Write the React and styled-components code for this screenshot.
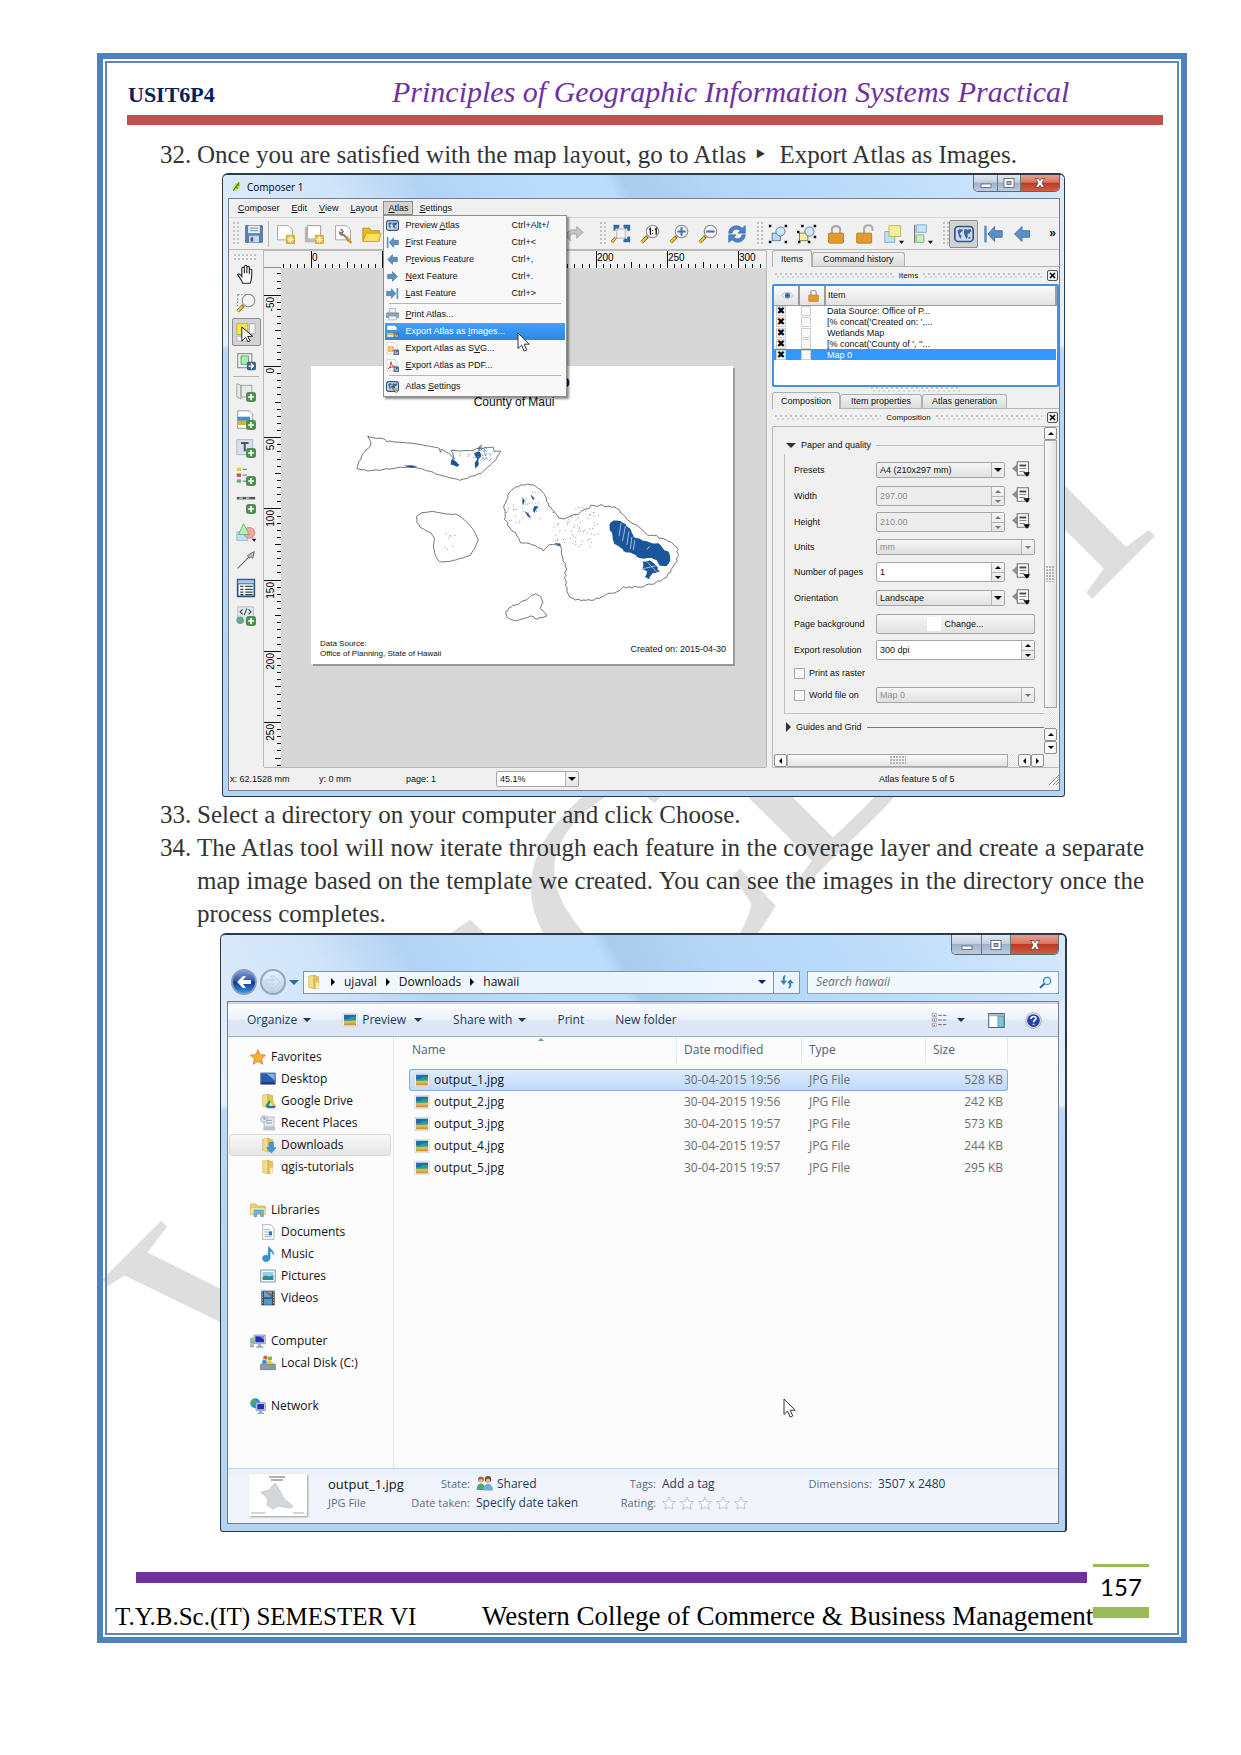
import React from "react";
import styled, { createGlobalStyle, css } from "styled-components";

const GlobalStyle = createGlobalStyle`
  *, *::before, *::after { box-sizing: border-box; }
  body { margin: 0; background: #fff; }
  button, input, select { font: inherit; color: inherit; margin: 0; padding: 0; }
  button { background: none; border: 0; }
  ol, ul { margin: 0; padding: 0; list-style: none; }
  h1, h2, p { margin: 0; font-weight: inherit; font-size: inherit; }
  svg { display: block; flex: none; }
`;

const serif = `"Liberation Serif", "Times New Roman", serif`;
const sans = `"Liberation Sans", Arial, sans-serif`;
const segoe = `"Open Sans", "Noto Sans", sans-serif`;

/* ---------- document page ---------- */

const Page = styled.div`
  padding: 53px 54px 112px 97px;
`;
const Border = styled.div`
  position: relative;
  border: 6px solid #4f81bd;
  padding: 2px;
`;
const Inner = styled.main`
  border: 2px solid #5b88bb;
`;
const Watermark = styled.div`
  position: absolute;
  inset: 0;
  z-index: -1;
  display: flex;
  align-items: center;
  justify-content: center;
  font: 334px/400px ${serif};
  color: #dedede;
  white-space: nowrap;
  user-select: none;
  span { transform: translate(-13px, 54px) rotate(-45deg); }
`;
const Header = styled.header`
  display: grid;
  grid-template-columns: 264px 1fr;
  align-items: baseline;
  height: 62px;
  margin: 0 14px 13px 20px;
  padding: 12px 0 0 1px;
  border-bottom: 10px solid #c0504d;
  font-family: ${serif};
  line-height: 33px;
`;
const CourseCode = styled.strong`
  font-size: 22px;
  color: #002060;
`;
const CourseTitle = styled.h1`
  font-size: 30px;
  font-style: italic;
  color: #7030a0;
`;
const Steps = styled.ol`
  padding: 0 33px 0 53px;
  font: 25px/33px ${serif};
  color: #333;
`;
const Step = styled.li`
  display: grid;
  grid-template-columns: 37px 1fr;
  text-align: justify;
`;
const Arrow = styled.span`
  display: inline-block;
  width: 27px;
  padding-left: 7px;
  font: 24px/16px "DejaVu Sans", sans-serif;
`;
const Figure = styled.div`
  display: flex;
  justify-content: center;
  padding: ${(p) => p.$pad};
`;
const Footer = styled.footer`
  display: grid;
  grid-template-columns: minmax(0, 1fr) 56px;
  column-gap: 6px;
  align-items: start;
  margin-top: 32px;
  padding: 0 28px 0 8px;
`;
const PurpleBar = styled.div`
  height: 11px;
  margin: 8px 0 0 21px;
  background: #7030a0;
`;
const PageNumber = styled.div`
  grid-row: span 2;
  border-top: 3px solid #9bbb59;
  border-bottom: 11px solid #9bbb59;
  font: 24px/40px Lato, sans-serif;
  text-align: center;
`;
const FooterText = styled.div`
  position: relative;
  display: grid;
  grid-template-columns: 367px 1fr;
  align-items: baseline;
  height: 50px;
  padding-top: 17px;
  font: 27px/33px ${serif};
  white-space: nowrap;
`;
const Semester = styled.span`
  font-size: 25px;
`;

/* ---------- glass window frame ---------- */

const Window = styled.section`
  width: ${(p) => p.$width}px;
  max-width: 100%;
  border: 1px solid #2f3943;
  border-top-width: 2px;
  border-right-width: ${(p) => (p.$heavy ? 2 : 1)}px;
  border-radius: 6px 6px 3px 3px;
  padding: 0 ${(p) => (p.$heavy ? 6 : 4)}px ${(p) => (p.$heavy ? 7 : 5)}px ${(p) => (p.$heavy ? 6 : 5)}px;
  background: linear-gradient(180deg, #d9e8f9 0, #e6f0fb 170px, #b9d8f7 175px, #b4d4f4 100%);
`;
const Glass = styled.div`
  margin: 0 ${(p) => (p.$heavy ? -6 : -4)}px 0 ${(p) => (p.$heavy ? -6 : -5)}px;
  padding: 0 ${(p) => (p.$heavy ? 6 : 4)}px 0 ${(p) => (p.$heavy ? 6 : 5)}px;
  border-radius: 4px 4px 0 0;
  background: linear-gradient(60deg, #dcebfb 0, #cfe3f9 14%, #b3d3f4 24%, #bcdcfd 38%, #bcdcfd 46%, #a9cdee 48%, #b4d5f5 58%, #b9dafa 70%, #c2dffb 82%, #d6e8fb 100%);
`;
const Caption = styled.div`
  display: flex;
  align-items: flex-start;
  justify-content: space-between;
`;
const Title = styled.h2`
  display: flex;
  align-items: center;
  gap: 5px;
  height: 23px;
  padding-left: 3px;
  font: 10px/20px ${segoe};
`;
const CaptionButtons = styled.div`
  display: flex;
  border: 1px solid #5c6875;
  border-top: 0;
  border-radius: 0 0 5px 5px;
  overflow: hidden;
`;
const CaptionButton = styled.button`
  display: flex;
  align-items: center;
  justify-content: center;
  width: ${(p) => p.$w}px;
  height: ${(p) => p.$h}px;
  border-left: ${(p) => (p.$first ? 0 : 1)}px solid #6b7783;
  background: ${(p) =>
    p.$close
      ? "linear-gradient(#e6a08e 0, #d67763 45%, #bd3a20 50%, #cf6040 100%)"
      : "linear-gradient(#dfe9f3 0, #c3d1e0 45%, #9fb2c8 50%, #bccde0 100%)"};
`;
const Client = styled.div`
  border: 1px solid #76808c;
  background: #f0f0f0;
`;

function CaptionControls({ w, wc, h }) {
  return (
    <CaptionButtons>
      <CaptionButton $w={w} $h={h} $first aria-label="Minimize">
        <svg width="12" height="12" viewBox="0 0 12 12"><rect x="1" y="7" width="10" height="3.5" fill="#fff" stroke="#556" strokeWidth=".8" /></svg>
      </CaptionButton>
      <CaptionButton $w={w} $h={h} aria-label="Maximize">
        <svg width="12" height="12" viewBox="0 0 12 12"><rect x="1" y="1.5" width="10" height="9" fill="#fff" stroke="#556" strokeWidth=".8" /><rect x="4" y="4.5" width="4" height="3" fill="#a9bacb" stroke="#556" strokeWidth=".8" /></svg>
      </CaptionButton>
      <CaptionButton $w={wc} $h={h} $close aria-label="Close">
        <svg width="12" height="12" viewBox="0 0 12 12"><path d="M1.5 1.5h3L6 3.7 7.500 1.5h3L8 6l2.500 4.500h-3L6 8.300 4.500 10.500h-3L4 6z" fill="#fff" stroke="#5b3a3a" strokeWidth=".8" /></svg>
      </CaptionButton>
    </CaptionButtons>
  );
}

/* ---------- icons, drawn on a 24 unit grid ---------- */

const plus = (
  <g><rect x="12" y="12" width="12" height="12" rx="3" fill="#4e8f52" /><path d="M18 14.500v7M14.500 18h7" stroke="#fff" strokeWidth="2" /></g>
);
const lens = (
  <g><path d="M9 15l-7 7" stroke="#7a5a10" strokeWidth="4" /><path d="M8 16l-6 6" stroke="#f2c830" strokeWidth="2.500" /><circle cx="15" cy="9" r="7.500" fill="#f3f3f3" stroke="#8c8c8c" strokeWidth="1.300" /></g>
);
const paper = <path d="M3 2h13l5 5v12H3z" fill="#fff" stroke="#999" />;
const star = <g><rect x="13" y="13" width="11" height="11" rx="1" fill="#d9b33c" /><path d="M18.500 14.500v8M14.500 18.500h8M15.700 15.700l5.600 5.600M21.300 15.700l-5.600 5.600" stroke="#fff6c8" strokeWidth="1.300" /></g>;
const saveBadge = <g><rect x="14" y="14" width="10" height="10" rx="1" fill="#4b6c8e" /><path d="M17 16v5h4v-3" stroke="#fff" strokeWidth="1.200" fill="none" /></g>;
const left = "M3 12l9-9v5h9v8h-9v5z";
const right = "M21 12l-9-9v5H3v8h9v5z";
const blue = "#5d8fc4";
const folder = <g><path d="M4 3l8-1v20l-8-2z" fill="#f3dd87" stroke="#cda94a" strokeWidth=".8" /><path d="M12 2l7 2v17l-7 1z" fill="#e6c55e" stroke="#c59f3d" strokeWidth=".8" /><path d="M15 13h4v8l-4 .6z" fill="#faf0bb" /></g>;
const monitor = <g><path d="M6 3h17v13H6z" fill="#c9d3dc" stroke="#7d8893" /><path d="M8 5h13v9H8z" fill="#1f2fae" /><path d="M14 5h7v5z" fill="#7397ec" /><path d="M12 17h5v3h3v2H9v-2h3z" fill="#9fa9b3" /></g>;
const mapGlyph = <g><rect x="1" y="3" width="22" height="18" rx="4" fill="#c9dcf0" stroke="#33587f" strokeWidth="2" /><path d="M4 8l3-2 4 1-1 2-2 1-1 2 2 2-1 4-2-3-1-4zM12 7l2-1 2 1 4-1 1 3-2 1v2l-2-1-1 2 1 1-2 4-2-4-1-3zM18 15l2 1-1 2-2-1z" fill="#3c689a" /></g>;

const ICONS = {
  qgis: <g><path d="M3 20L9 5l9-3 3 4-3 10-8 6z" fill="#c8e04a" /><path d="M5 21L18 3M9 12l6 4M12 8l6 2" stroke="#4c8a20" strokeWidth="2.500" fill="none" /></g>,
  save: <g><path d="M2 2h20v20H2z" fill="#5b82ad" stroke="#3d6188" /><path d="M5 2h14v9H5z" fill="#e8eff5" /><path d="M7 5h10M7 8h10" stroke="#8fa7bd" strokeWidth="1.500" /><path d="M6 14h12v8H6z" fill="#cbd7e2" /><path d="M8 16h3v5H8z" fill="#3d6188" /></g>,
  newPage: <g>{paper}{star}</g>,
  copyPage: <g><path d="M1 4h3v15h10v3H1z" fill="#b8b8b8" /><path d="M4 2h16v16H4z" fill="#fff" stroke="#8a8a8a" />{star}</g>,
  wrench: <g>{paper}<path d="M9 6l3 3-1 2-3-1c0 3 3 4 5 3l6 8" fill="none" stroke="#777" strokeWidth="2" /><path d="M16 15l6 8" stroke="#c9a227" strokeWidth="3" /></g>,
  open: <g><path d="M1 5h8l2 3h10v12H1z" fill="#e9b820" stroke="#b98d15" /><path d="M5 11h18l-3 10H1z" fill="#ffdf5e" stroke="#c99a1c" /></g>,
  redo: <path d="M7 20c-8-3-6-13 3-13h4V3l8 7-8 7v-5h-4c-4 0-5 4-3 8z" fill="#c4c4c4" stroke="#a2a2a2" />,
  zoomFull: <g><path d="M6 16l-5 6" stroke="#8a6a18" strokeWidth="3.500" /><path d="M6 16l-5 6" stroke="#f2c830" strokeWidth="2" /><path d="M7 6h10v11H7z" fill="#f4f4f4" stroke="#aaa" /><path d="M3 1h7v3L8 6 6 5 5 8 3 8zM23 1h-8v3l2 2 2-1 1 3h3zM23 22h-8v-3l2-2 2 1 1-3h3z" fill="#356aa5" /></g>,
  zoomActual: <g>{lens}<path d="M11 7l1.500-1.500V13M18 7l1.500-1.500V13" stroke="#222" strokeWidth="1.600" fill="none" /><path d="M15 7.500v1M15 11v1" stroke="#222" strokeWidth="1.500" /></g>,
  zoomIn: <g>{lens}<path d="M15 4v10M10 9h10" stroke="#3d74b5" strokeWidth="2.500" /></g>,
  zoomOut: <g>{lens}<path d="M10 9h10" stroke="#3d74b5" strokeWidth="2.500" /></g>,
  refresh: <g fill="#4c83c3" stroke="#2f609c" strokeWidth=".7"><path d="M2 11C2 3 12-1 18 5l4-3v9h-9l3-3C12 5 7 6 6 11z" /><path d="M22 13c0 8-10 12-16 6l-4 3v-9h9l-3 3c4 3 9 2 10-3z" /></g>,
  group: <g><path d="M5 11h10v9H5z" fill="#b9d9f4" stroke="#4d6f96" /><circle cx="15" cy="9" r="5.500" fill="#cfe6fa" stroke="#4d6f96" /><path d="M1 1h3v3H1zM20 1h3v3h-3zM1 20h3v3H1zM20 20h3v3h-3z" fill="#111" /></g>,
  ungroup: <g><path d="M3 11h10v9H3z" fill="#f3eea0" stroke="#6d6d3c" /><circle cx="15" cy="9" r="5.500" fill="#cfe6fa" stroke="#4d6f96" /><path d="M5 1h3v3H5zM20 1h3v3h-3zM0 8h3v3H0zM1 20h3v3H1zM13 20h3v3h-3zM20 14h3v3h-3z" fill="#111" /></g>,
  lock: <g><path d="M7 12V7c0-6 10-6 10 0v5" fill="none" stroke="#aaa" strokeWidth="2.500" /><rect x="3" y="11" width="18" height="12" rx="1" fill="#e39a2d" stroke="#b87516" /></g>,
  unlock: <g><path d="M11 11V6c0-6 10-6 10 0v2" fill="none" stroke="#aaa" strokeWidth="2.500" /><rect x="2" y="11" width="18" height="12" rx="1" fill="#e39a2d" stroke="#b87516" /></g>,
  raise: <g><path d="M1 9h12v13H1z" fill="#bfe0f7" stroke="#7ba3c4" /><path d="M6 2h14v13H6z" fill="#f4ee9a" stroke="#b8ae4a" /><path d="M18 20h6l-3 4z" fill="#111" /></g>,
  align: <g><path d="M2 1v22" stroke="#777" strokeWidth="1.500" /><path d="M4 1h12v9H4z" fill="#c4e4fb" stroke="#7ba3c4" /><path d="M4 13h9v9H4z" fill="#c4f2c4" stroke="#7ab57a" /><path d="M18 20h6l-3 4z" fill="#111" /></g>,
  preview: mapGlyph,
  first: <g><path d="M3 2v20" stroke={blue} strokeWidth="3" /><path d="M6 12l8-9v5h9v8h-9v5z" fill={blue} stroke="#3e6c9e" /></g>,
  prev: <path d={left} fill={blue} stroke="#3e6c9e" />,
  next: <path d={right} fill={blue} stroke="#3e6c9e" />,
  last: <g><path d="M21 2v20" stroke={blue} strokeWidth="3" /><path d="M18 12l-8-9v5H1v8h9v5z" fill={blue} stroke="#3e6c9e" /></g>,
  print: <g><path d="M6 1h12v9H6z" fill="#e5edf2" stroke="#8798a5" /><path d="M1 9h22v9H1z" fill="#8fa3b1" stroke="#5f7483" /><path d="M5 15h14v7H5z" fill="#eef2f4" stroke="#8798a5" /></g>,
  expImage: <g><path d="M2 1h14l4 4v17H2z" fill="#fff" stroke="#999" /><path d="M2 9h18v6H2z" fill="#4f91c9" /><path d="M2 15h18v4H2z" fill="#e0b13a" />{saveBadge}</g>,
  expSvg: <g><path d="M2 1h14l4 4v17H2z" fill="#fff" stroke="#bbb" /><circle cx="9" cy="13" r="6" fill="#f0a23c" /><path d="M9 7v12M3 13h12" stroke="#fff2d2" strokeWidth="1.500" />{saveBadge}</g>,
  expPdf: <g><path d="M2 1h14l4 4v17H2z" fill="#fff" stroke="#bbb" /><path d="M4 18c4-3 6-8 5-13 0 6 4 9 9 10-6-1-10 0-14 3z" fill="none" stroke="#c9302c" strokeWidth="1.800" />{saveBadge}</g>,
  atlasSet: <g>{mapGlyph}<path d="M10 11l10 12" stroke="#5d5d5d" strokeWidth="4" /><path d="M14 15l7 8" stroke="#e8bf3a" strokeWidth="2.500" /></g>,
  hand: <path d="M8 23c-1-4-4-7-6-10 1-2 3-1 5 2V5c1-2 3-1 3 0v6-8c1-2 3-2 3 0v8-7c1-2 3-1 3 0v8-5c1-1 3-1 3 1 0 6 0 11-2 15z" fill="#fff" stroke="#222" strokeWidth="1.300" />,
  pageZoom: <g><path d="M2 2h10M2 2v15" stroke="#888" strokeWidth="1.200" strokeDasharray="2 2" />{lens}</g>,
  select: <g><path d="M1 2h13v13H1z" fill="#f7e64a" stroke="#c2a92b" /><path d="M16 2h7v12h-7zM1 17h14v6H1z" fill="#f2f2f2" stroke="#aaa" /><path d="M7 6l13 11-6 .5 3 5-2.500 1.500-3-5.500L7 23z" fill="#fff" stroke="#222" strokeWidth="1.200" /></g>,
  moveContent: <g><path d="M2 3h17v17H2z" fill="none" stroke="#999" strokeWidth="1.500" /><path d="M6 6h9v10H6z" fill="#a8eeb0" stroke="#5b9b63" /><rect x="13" y="13" width="11" height="10" rx="2" fill="#3f648b" /><path d="M15 18h6m-3-3l3 3-3 3" stroke="#fff" strokeWidth="1.500" fill="none" /></g>,
  addMap: <g><path d="M1 2l5 2v16l-5-2zM6 4h13v14H6z" fill="#e9e9e9" stroke="#999" />{plus}</g>,
  addImage: <g><path d="M2 1h14l4 4v17H2z" fill="#fff" stroke="#888" /><path d="M2 8h15v5H2z" fill="#4791cf" /><path d="M2 13h15v5H2z" fill="#d8b13a" />{plus}</g>,
  addLabel: <g><path d="M1 2h19v18H1z" fill="#d7e1ec" stroke="#a3b0be" /><path d="M6 6h9M10.500 6v10" stroke="#555" strokeWidth="2.500" />{plus}</g>,
  addLegend: <g><path d="M1 2h5v4H1z" fill="#e2d23a" /><path d="M1 9h5v4H1z" fill="#cf4d4d" /><path d="M1 16h5v4H1z" fill="#6fae6f" /><path d="M8 4h5M8 11h5M8 18h4" stroke="#888" strokeWidth="1.500" />{plus}</g>,
  addScale: <g><path d="M1 5h22" stroke="#555" strokeWidth="3" /><path d="M4 5h4M12 5h4" stroke="#ddd" strokeWidth="1.500" />{plus}</g>,
  addShape: <g><path d="M1 12h13v10H1z" fill="#bfe0f7" stroke="#8cb3d1" /><circle cx="16" cy="13" r="6.500" fill="#f5a3a3" stroke="#cf7b7b" /><path d="M9 2l7 13H3z" fill="#b7efb7" stroke="#68ad68" /><path d="M19 20h5l-2 4z" fill="#111" /></g>,
  addArrow: <g><path d="M2 22L16 8" stroke="#777" strokeWidth="1.500" /><path d="M22 2l-2 8-2-2-2 2-2-3 2-2z" fill="#bbb" stroke="#555" /></g>,
  addTable: <g><path d="M2 2h20v20H2z" fill="#fff" stroke="#2e5576" strokeWidth="2" /><path d="M2 2h20v5H2z" fill="#a9cbe6" stroke="#2e5576" /><path d="M5 10h4M11 10h9M5 13.500h4M11 13.500h9M5 17h4M11 17h9M5 20h4M11 20h9" stroke="#345" strokeWidth="1.500" /></g>,
  addHtml: <g><path d="M2 1h19v18H2z" fill="#dfe7ee" stroke="#b1bcc6" /><path d="M8 4L5 7l3 3M15 4l3 3-3 3M13 3l-3 8" stroke="#444" strokeWidth="1.300" fill="none" /><circle cx="5" cy="17" r="4.500" fill="#6aa889" />{plus}</g>,
  eye: <g><path d="M1 12c6-8 16-8 22 0-6 7-16 7-22 0z" fill="#e3ebf2" stroke="#9fb0c0" /><circle cx="12" cy="12" r="5" fill="#5a83ab" /><circle cx="12" cy="12" r="2" fill="#213c57" /></g>,
  dataDefined: <g><path d="M0 10l7-6v12z" fill="#8f8f8f" /><path d="M7 1h15v18H7z" fill="#f8f8f8" stroke="#777" strokeWidth="1.500" /><path d="M10 6h9" stroke="#444" strokeWidth="2.500" /><path d="M10 10h9M10 14h7" stroke="#888" strokeWidth="1.500" /><path d="M15 15h9l-4 6z" fill="#000" /></g>,
  folder,
  favorites: <path d="M12 1l3.300 7.500 8 .8-6 5.400 1.700 8L12 18.500 5 22.700l1.700-8-6-5.400 8-.8z" fill="#f9b233" stroke="#cf7b1d" strokeWidth="1.200" />,
  desktop: <g><path d="M1 3h22v17H1z" fill="#2a5bb5" stroke="#6d7f96" strokeWidth="1.500" /><path d="M10 4h12v10z" fill="#7fb0ef" /><path d="M2 17h20v2H2z" fill="#1a2d57" /></g>,
  gdrive: <g>{folder}<path d="M14 10h4l6 9h-5z" fill="#f7c325" /><path d="M14 10l2 4-5 8-3-3z" fill="#1da462" /><path d="M12 19h12l-2 4H10z" fill="#2d6fe0" /></g>,
  recent: <g><path d="M6 3h15v14H6z" fill="#e8ecef" stroke="#9aa3ab" /><path d="M9 8h9M9 12h9" stroke="#8b98a5" strokeWidth="1.500" /><path d="M5 18h18v5H5z" fill="#b9c1c9" /><circle cx="6" cy="6" r="5" fill="#dbe5ee" stroke="#8f9ba6" /><path d="M6 3v3h2" stroke="#444" fill="none" /></g>,
  downloads: <g>{folder}<path d="M14 8h6v8h4l-7 8-7-8h4z" fill="#3b9be0" stroke="#1d6eb0" strokeWidth=".8" /></g>,
  libraries: <g><path d="M1 3h8l2 3h12v5H1z" fill="#eed67b" stroke="#c4a445" /><path d="M1 8h22v11H1z" fill="#f6e59b" stroke="#cbb055" /><path d="M6 12h14v10h-4v-5h-6v5H6z" fill="#6bb7e3" stroke="#3b88b8" strokeWidth=".8" /></g>,
  documents: <g><path d="M4 1h12l5 5v17H4z" fill="#fdfdfd" stroke="#8b95a0" /><path d="M7 8h8M7 12h5M7 16h5M7 19h10" stroke="#8ba6c6" strokeWidth="1.300" /><path d="M13 11h5v6h-5z" fill="#3c74b8" /></g>,
  music: <path d="M13 1c2 4 8 5 7 12-1-4-3-5-5-5v10c0 7-12 7-11 0 0-4 5-5 8-3z" fill="#2f94dd" stroke="#1b6cab" strokeWidth=".8" />,
  pictures: <g><path d="M1 3h22v18H1z" fill="#f3f5f7" stroke="#8f9aa5" strokeWidth="1.500" /><path d="M4 6h16v12H4z" fill="#8fd0ee" /><path d="M4 13c5-4 9 2 16-2v7H4z" fill="#2f8d8d" /></g>,
  videos: <g><path d="M2 1h20v22H2z" fill="#3a3f45" /><path d="M6 2h12v9H6z" fill="#5aa8dd" /><path d="M6 13h12v9H6z" fill="#4b9ad2" /><path d="M6 2l12 9v-5z" fill="#b5543a" /><path d="M4 2v20M20 2v20" stroke="#ddd" strokeWidth="1.500" strokeDasharray="2 2" /></g>,
  computer: <g><path d="M1 8h4v13H1z" fill="#bcc7cf" stroke="#7d8893" /><path d="M2 11h2v4H2z" fill="#5fc04f" />{monitor}</g>,
  disk: <g><path d="M1 14h22l-2-4H4z" fill="#d6dbe0" /><path d="M1 14h22v8H1z" fill="#8f9aa3" stroke="#626c75" /><path d="M14 17h7v2h-7z" fill="#46c254" /><path d="M5 2c3-2 4 0 6 0v5c-3 0-4-1-6 0z" fill="#e8562a" /><path d="M12 2c2 1 4 1 6 0v5c-2 1-4 1-6 0z" fill="#7fba2f" /><path d="M4 8c3-1 4 0 6 0v5H3z" fill="#2f8fdc" /><path d="M11 8c2 1 4 1 6 0v5h-6z" fill="#f7c325" /></g>,
  network: <g><circle cx="8" cy="8" r="7.500" fill="#2f8fdc" /><path d="M3 4c4-3 7 0 5 3s-3 5-5 4-2-4 0-7z" fill="#49b04f" /><path d="M9 7h14v12H9z" fill="#c9d3dc" stroke="#7d8893" /><path d="M11 9h10v8H11z" fill="#1f2fc0" /><path d="M14 19h4v3h3v2H11v-2h3z" fill="#9fa9b3" /></g>,
  jpg: <g><path d="M1 2h22v20H1z" fill="#f5f5f5" stroke="#d2d2c8" /><path d="M3 4h18v9H3z" fill="#1d6fae" /><path d="M3 10l5 1 5-3 8-1v7H3z" fill="#22a08a" /><path d="M3 13c6 1 12-1 18 0v7H3z" fill="#e0b75c" /><path d="M3 17h18v3H3z" fill="#c79a48" /></g>,
  shared: <g><circle cx="7" cy="6" r="4" fill="#9b6b42" /><path d="M1 21c0-12 12-12 12 0z" fill="#4fa66d" /><circle cx="17" cy="6" r="4.500" fill="#6d4a2f" /><path d="M10 22c0-13 14-13 14 0z" fill="#6fb0cf" /><circle cx="17" cy="8" r="3" fill="#e9b98d" /><circle cx="7" cy="8" r="2.500" fill="#e9b98d" /></g>,
  view: <g><path d="M2 2h6v5H2zM2 9h6v5H2zM2 17h6v5H2z" fill="#fff" stroke="#8a8a9a" /><path d="M4 4h2v2H4zM4 11h2v2H4zM4 19h2v2H4z" fill="#b5543a" /><path d="M11 5h5M18 5h5M11 12h5M18 12h5M11 19h5M18 19h5" stroke="#667" strokeWidth="1.500" /></g>,
  pane: <g><path d="M1 2h22v20H1z" fill="#fff" stroke="#4f6478" strokeWidth="1.500" /><path d="M2 3h20v3H2z" fill="#9fb5c9" /><path d="M14 6h8v15h-8z" fill="#7fc4d8" stroke="#4f8ba0" /></g>,
  help: <g><circle cx="12" cy="12" r="11" fill="#e3e6ee" stroke="#8f95a8" /><circle cx="12" cy="12" r="9" fill="#2644a8" /><path d="M8.500 10c0-5 7-4.500 7-1 0 2.500-3.500 2.500-3.500 5.500M12 16.500v2" stroke="#fff" strokeWidth="2.300" fill="none" /></g>,
  search: <g><path d="M10 14l-8 8" stroke="#2d5a9e" strokeWidth="3.500" /><circle cx="15" cy="9" r="6.500" fill="#e7f4fd" stroke="#3583c4" strokeWidth="2.500" /></g>,
  goRefresh: <g fill="#2f7fc1"><path d="M10 2c-4 0-5 4-4 8H2l5 6 5-6H9c-1-3 0-5 1-8z" /><path d="M14 22c4 0 5-4 4-8h4l-5-6-5 6h3c1 3 0 5-1 8z" /></g>,
  rate: <path d="M12 2l3 7 8 .6-6 5 2 8L12 18.500 5 22.600l2-8-6-5 8-.6z" fill="#fff" stroke="#b5bcc6" strokeWidth="1.500" />,
};

function Icon({ name, size = 20 }) {
  return <svg width={size} height={size} viewBox="0 0 24 24" aria-hidden="true">{ICONS[name]}</svg>;
}

const Pointer = styled.svg.attrs({ viewBox: "0 0 13 20", width: 13, height: 20, "aria-hidden": true, children: <path d="M1 1v15.500l3.600-3.400 2.600 6 2.600-1.200-2.600-5.700h5z" fill="#fff" stroke="#334" strokeWidth="1" /> })`
  position: absolute;
  left: ${(p) => p.$x}px;
  top: ${(p) => p.$y}px;
`;

const Tri = styled.span`
  display: block;
  width: 0;
  height: 0;
  flex: none;
  color: ${(p) => p.$color || "#000"};
  border: ${(p) => p.$s || 3}px solid transparent;
  ${(p) => p.$dir === "up" && css`border-top: 0; border-bottom-color: currentColor;`}
  ${(p) => p.$dir === "down" && css`border-bottom: 0; border-top-color: currentColor;`}
  ${(p) => p.$dir === "left" && css`border-left: 0; border-right-color: currentColor;`}
  ${(p) => p.$dir === "right" && css`border-right: 0; border-left-color: currentColor;`}
`;

/* ---------- map composer ---------- */

const Composer = styled(Client)`
  font: 9px/11px ${sans};
  color: #111;
`;
const MenuBar = styled.nav`
  display: flex;
  align-items: center;
  height: 19px;
  padding-left: 3px;
  border-bottom: 1px solid #d8d8d8;
`;
const MenuSlot = styled.div`
  position: relative;
`;
const MenuButton = styled.button`
  height: 14px;
  padding: 0 ${(p) => p.$pad || 5}px;
  border: 1px solid ${(p) => (p.$open ? "#8b8b8b" : "transparent")};
  background: ${(p) => (p.$open ? "#d4d4d4" : "none")};
  line-height: 12px;
  &::first-letter { text-decoration: underline; }
`;
const Popup = styled.div`
  position: absolute;
  z-index: 3;
  left: 0;
  top: 14px;
  width: 184px;
  padding: 1px;
  border: 1px solid #8f8f8f;
  background: #f8f8f8;
  box-shadow: 2px 2px 2px rgba(0, 0, 0, 0.45);
`;
const PopupItem = styled.button`
  display: grid;
  grid-template-columns: 16px 103px 1fr;
  column-gap: 3px;
  align-items: center;
  width: 100%;
  height: 17px;
  padding-left: 1px;
  text-align: left;
  white-space: nowrap;
  color: ${(p) => (p.$active ? "#fff" : "#111")};
  background: ${(p) => (p.$active ? "linear-gradient(#41a0ff, #2f86dd)" : "none")};
`;
const PopupRule = styled.hr`
  height: 1px;
  margin: 1px 4px 2px;
  border: 0;
  background: #b5b5b5;
`;
const ToolBar = styled.div`
  display: flex;
  align-items: center;
  height: 32px;
  padding-left: 4px;
  border-bottom: 1px solid #b9b9b9;
  overflow: hidden;
`;
const Grip = styled.span`
  flex: none;
  width: ${(p) => (p.$across ? 24 : 6)}px;
  height: ${(p) => (p.$across ? 6 : 24)}px;
  margin: ${(p) => p.$margin || 0};
  background: radial-gradient(circle at 1px 1px, #c2c2c2 1px, transparent 1px) 0 0 / 4px 4px;
`;
const Tool = styled.button`
  display: flex;
  flex: none;
  align-items: center;
  justify-content: center;
  width: 29px;
  height: 28px;
  border: 1px solid ${(p) => (p.$on ? "#8e8e8e" : "transparent")};
  border-radius: 2px;
  background: ${(p) => (p.$on ? "#d3d3d3" : "none")};
`;
const Rule = styled.span`
  flex: none;
  width: ${(p) => (p.$across ? 26 : 1)}px;
  height: ${(p) => (p.$across ? 1 : 26)}px;
  margin: ${(p) => (p.$across ? "1px 0" : "0 1px 0 0")};
  background: #b5b5b5;
`;
const More = styled.button`
  flex: 1;
  font-weight: bold;
  font-size: 12px;
  text-align: right;
  padding-right: 3px;
`;
const Workspace = styled.div`
  display: flex;
  height: 518px;
`;
const ToolBox = styled.div`
  display: flex;
  flex-direction: column;
  align-items: center;
  width: 34px;
  flex: none;
  padding-top: 4px;
`;
const ToolGroup = styled.div`
  display: flex;
  flex-direction: column;
  gap: ${(p) => p.$gap || 0}px;
`;
const MapView = styled.div`
  flex: 1;
  min-width: 0;
  display: grid;
  grid-template-columns: 17px 1fr;
  grid-template-rows: 17px 1fr;
  border: 1px solid #b9b9b9;
  border-radius: 0 2px 2px 2px;
  overflow: hidden;
`;
const Corner = styled.div`
  border-bottom: 1px solid #e46a6a;
`;
const RulerSvg = styled.svg`
  width: 100%;
  height: 100%;
  font: 10px ${sans};
`;
const Canvas = styled.div`
  padding: 98px 0 0 30px;
  background: #d7d7d7;
`;
const MapPage = styled.article`
  width: 422px;
  height: 298px;
  background: #fff;
  box-shadow: 2px 2px 0 #9a9a9a;
`;
const MapTitle = styled.div`
  padding: 4px 18px 0 0;
  text-align: center;
  font: bold 17px/24px ${sans};
`;
const MapSubtitle = styled.div`
  padding-right: 16px;
  text-align: center;
  font-size: 12px;
  line-height: 16px;
`;
const MapDrawing = styled.svg`
  margin: 25px 0 17px 45px;
`;
const MapNotes = styled.div`
  display: flex;
  align-items: center;
  justify-content: space-between;
  padding: 0 7px 0 9px;
  line-height: 10px;
`;
const SourceNote = styled.div`
  font-size: 8px;
`;
const Splitter = styled.div`
  flex: none;
  width: 5px;
`;
const Panel = styled.aside`
  flex: none;
  width: 287px;
  display: flex;
  flex-direction: column;
`;
const Tabs = styled.div`
  display: flex;
  align-items: flex-end;
  height: 17px;
  border-bottom: 1px solid #b5b5b5;
`;
const Tab = styled.button`
  height: ${(p) => (p.$on ? 17 : 14)}px;
  margin-bottom: ${(p) => (p.$on ? -1 : 0)}px;
  padding: 0 ${(p) => p.$pad || 9}px;
  border: 1px solid #b0b0b0;
  border-bottom: 0;
  border-radius: 3px 3px 0 0;
  background: ${(p) => (p.$on ? "#f0f0f0" : "linear-gradient(#f2f2f2, #dcdcdc)")};
`;
const DockTitle = styled.div`
  display: flex;
  align-items: center;
  gap: 5px;
  height: 17px;
  padding: 0 1px 0 3px;
  font-size: 8px;
`;
const Dots = styled.span`
  flex: ${(p) => (p.$w ? "none" : 1)};
  width: ${(p) => (p.$w ? p.$w + "px" : "auto")};
  height: 5px;
  margin: ${(p) => (p.$w ? "0 auto" : 0)};
  background: radial-gradient(circle at 1px 1px, #c6c6c6 1px, transparent 1px) 0 0 / 5px 5px, radial-gradient(circle at 3px 4px, #d6d6d6 1px, transparent 1px) 0 0 / 5px 5px;
`;
const CloseDock = styled.button`
  display: flex;
  align-items: center;
  justify-content: center;
  width: 11px;
  height: 11px;
  border: 1px solid #555;
  border-radius: 2px;
`;
const TreeFrame = styled.div`
  height: 103px;
  border: 2px solid #3f93e2;
  border-radius: 2px;
  background: #fff;
`;
const Tree = styled.table`
  width: 100%;
  table-layout: fixed;
  border-collapse: collapse;
  th { height: 19px; padding: 0 0 0 2px; text-align: left; font-weight: normal; border-right: 2px solid #9b9b9b; border-bottom: 1px solid #9b9b9b; background: linear-gradient(#fbfbfb, #e3e3e3); }
  th svg { margin: 0 auto; }
  td { height: 11px; padding: 0 0 0 2px; line-height: 10px; }
`;
const TreeRow = styled.tr`
  color: ${(p) => (p.$on ? "#fff" : "#111")};
  background: ${(p) => (p.$on ? "#3399ff" : "none")};
`;
const Check = styled.input.attrs({ type: "checkbox" })`
  appearance: none;
  display: flex;
  align-items: center;
  justify-content: center;
  flex: none;
  width: ${(p) => p.$s || 10}px;
  height: ${(p) => p.$s || 10}px;
  border: 1px solid ${(p) => (p.$s ? "#a9a9a9" : "#cfcfcf")};
  background: #fafafa;
  color: #000;
  &:checked::before { content: "✖"; font: 10px/9px "DejaVu Sans", sans-serif; }
`;
const ScrollArea = styled.div`
  flex: 1;
  display: grid;
  grid-template-columns: minmax(0, 1fr) 13px;
  grid-template-rows: minmax(0, 1fr) 13px;
  border: 1px solid #b9b9b9;
  border-right: 0;
  border-radius: 2px;
  padding-right: 2px;
`;
const Form = styled.form`
  padding: 9px 0 0 11px;
`;
const GroupHead = styled.div`
  display: flex;
  align-items: center;
  gap: 5px;
  height: 18px;
  padding-left: 2px;
  &::after { content: ""; flex: 1; height: 1px; background: ${(p) => (p.$closed ? "#777" : "#c2c2c2")}; }
`;
const Fields = styled.div`
  display: flex;
  flex-direction: column;
  gap: 6px;
  padding: 6px 9px 9px;
  border: 1px solid #c2c2c2;
  border-width: 0 0 1px 1px;
  margin-bottom: 4px;
`;
const Field = styled.div`
  display: grid;
  grid-template-columns: 82px minmax(0, 1fr) ${(p) => (p.$wide ? "" : "30px")};
  align-items: center;
  height: ${(p) => p.$h || 20}px;
`;
const Label = styled.label`
  display: flex;
  align-items: center;
  gap: 4px;
  white-space: nowrap;
`;
const DefineButton = styled.button`
  padding-left: 7px;
`;
const SelectWrap = styled.div`
  position: relative;
  height: 16px;
  width: ${(p) => (p.$w ? p.$w + "px" : "auto")};
  border: 1px solid #a5a5a5;
  border-radius: 2px;
  background: ${(p) => (p.$white ? "#fff" : "linear-gradient(#f6f6f6, #e0e0e0)")};
  color: ${(p) => (p.$off ? "#8d8d8d" : "#111")};
  select { display: block; appearance: none; width: 100%; height: 14px; padding: 0 14px 0 3px; border: 0; background: none; color: inherit; opacity: 1; }
`;
const SelectArrow = styled.span`
  position: absolute;
  right: 0;
  top: 0;
  bottom: 0;
  width: 13px;
  display: flex;
  align-items: center;
  justify-content: center;
  border-left: 1px solid #b5b5b5;
  background: linear-gradient(#f6f6f6, #e6e6e6);
  pointer-events: none;
`;
const Spin = styled.div`
  display: flex;
  height: 20px;
  border: 1px solid #a5a5a5;
  border-radius: 2px;
  background: ${(p) => (p.$off ? "#ededed" : "#fff")};
  color: ${(p) => (p.$off ? "#8d8d8d" : "#111")};
  input { flex: 1; min-width: 0; border: 0; padding-left: 3px; background: none; }
`;
const SpinButtons = styled.div`
  width: 13px;
  display: grid;
  grid-template-rows: 1fr 1fr;
  border-left: 1px solid #b5b5b5;
  background: linear-gradient(#f6f6f6, #e6e6e6);
  button { display: flex; align-items: center; justify-content: center; }
  button + button { border-top: 1px solid #b5b5b5; }
`;
const ChangeButton = styled.button`
  display: flex;
  align-items: center;
  justify-content: center;
  gap: 3px;
  height: 20px;
  border: 1px solid #a5a5a5;
  border-radius: 2px;
  background: linear-gradient(#f6f6f6, #e2e2e2);
`;
const Swatch = styled.span`
  width: 14px;
  height: 14px;
  background: #fff;
`;
const ScrollBar = styled.div`
  display: flex;
  flex-direction: ${(p) => (p.$row ? "row" : "column")};
  padding: ${(p) => (p.$row ? "0 0 0 1px" : 0)};
  background: repeating-conic-gradient(#fafafa 0 25%, #e4e4e4 0 50%) 0 0 / 2px 2px;
`;
const ScrollButton = styled.button`
  display: flex;
  align-items: center;
  justify-content: center;
  flex: none;
  width: 13px;
  height: 13px;
  border: 1px solid #8f8f8f;
  border-radius: 2px;
  background: #f8f8f8;
`;
const Thumb = styled.div`
  flex: 1;
  display: flex;
  align-items: center;
  justify-content: center;
  margin: ${(p) => (p.$row ? "0 10px 0 0" : "0 0 20px")};
  border: 1px solid #a5a5a5;
  background: linear-gradient(${(p) => (p.$row ? 180 : 90)}deg, #fafafa, #e3e3e3);
  &::before { content: ""; width: ${(p) => (p.$row ? 16 : 9)}px; height: ${(p) => (p.$row ? 9 : 16)}px; background: radial-gradient(circle at 1px 1px, #b5b5b5 1px, transparent 1px) 0 0 / 3px 3px; }
`;
const StatusBar = styled.div`
  display: grid;
  grid-template-columns: 89px 87px 90px 83px 1fr 180px;
  align-items: center;
  height: 22px;
  padding-left: 1px;
`;
const ResizeGrip = styled.svg`
  align-self: end;
`;
const StatusRight = styled.div`
  grid-column: 6;
  display: flex;
  justify-content: space-between;
`;

const MENU = [
  ["preview", "Preview Atlas", "Ctrl+Alt+/", 8],
  ["first", "First Feature", "Ctrl+<", 0],
  ["prev", "Previous Feature", "Ctrl+,", 1],
  ["next", "Next Feature", "Ctrl+.", 0],
  ["last", "Last Feature", "Ctrl+>", 0],
  null,
  ["print", "Print Atlas...", "", 0],
  ["expImage", "Export Atlas as Images...", "", 16],
  ["expSvg", "Export Atlas as SVG...", "", 17],
  ["expPdf", "Export Atlas as PDF...", "", 0],
  null,
  ["atlasSet", "Atlas Settings", "", 6],
];

function Mnemonic({ text, at }) {
  return <span>{text.slice(0, at)}<u>{text[at]}</u>{text.slice(at + 1)}</span>;
}

function AtlasMenu() {
  return (
    <Popup role="menu">
      {MENU.map((m, i) =>
        m ? (
          <PopupItem key={i} role="menuitem" $active={m[0] === "expImage"}>
            <Icon name={m[0]} size={13} />
            <Mnemonic text={m[1]} at={m[3]} />
            <span>{m[2]}</span>
          </PopupItem>
        ) : (
          <PopupRule key={i} />
        )
      )}
      <Pointer $x={133} $y={116} />
    </Popup>
  );
}

const STEP = 7.12;
function Ruler({ vertical, zero, from, to }) {
  const items = [];
  for (let k = from; k <= to; k++) {
    const p = Math.round(zero + k * STEP);
    const len = k % 10 === 0 ? 17 : k % 5 === 0 ? 6 : 4;
    items.push(<path key={k} d={vertical ? `M${17 - len} ${p + 0.5}h${len}` : `M${p + 0.5} ${17 - len}v${len}`} stroke="#111" />);
    if (k % 10 === 0)
      items.push(
        vertical ? (
          <text key={"t" + k} transform={`translate(10 ${p + 2}) rotate(-90)`} textAnchor="end">{k * 5}</text>
        ) : (
          <text key={"t" + k} x={p + 1} y="10">{k * 5}</text>
        )
      );
  }
  return <RulerSvg aria-hidden="true">{items}</RulerSvg>;
}

let seed = 7;
const rnd = () => {
  seed = (seed * 16807) % 2147483647;
  return seed / 2147483647 - 0.5;
};
function coast(text, rough) {
  const n = text.split(" ").map(Number);
  const pts = [];
  for (let i = 0; i < n.length; i += 2) pts.push([n[i], n[i + 1]]);
  let d = "";
  pts.forEach(([x, y], i) => {
    const [u, v] = pts[(i + 1) % pts.length];
    const parts = Math.max(1, Math.round(Math.hypot(u - x, v - y) / 8));
    for (let k = 0; k < parts; k++)
      d += `${d ? "L" : "M"}${(x + ((u - x) * k) / parts + rnd() * rough).toFixed(1)} ${(y + ((v - y) * k) / parts + rnd() * rough).toFixed(1)}`;
  });
  return d + "Z";
}
const ISLANDS = [
  coast("430 137 437 143 470 145 482 154 540 158 575 164 600 168 630 176 632 188 636 178 655 190 672 208 662 182 690 182 720 183 735 174 780 173 782 184 800 184 790 205 765 232 745 250 710 262 687 270 640 258 590 240 560 232 520 232 437 243 397 236 405 215 415 192 435 170 437 155", 3),
  coast("565 380 580 367 610 364 650 371 680 373 700 390 722 415 738 448 730 470 718 494 690 505 660 513 630 515 618 495 612 470 615 445 605 428 580 415 567 398", 2),
  coast("813 672 825 655 850 640 880 620 898 611 915 622 921 638 912 660 928 668 925 680 905 685 885 678 860 684 835 691 820 685", 6),
  coast("811 370 815 330 830 300 850 288 878 281 905 292 925 315 935 340 950 365 968 387 1000 378 1030 362 1055 348 1090 346 1125 355 1145 375 1170 400 1190 410 1210 432 1240 437 1270 455 1292 465 1297 495 1290 520 1275 545 1250 570 1200 590 1145 592 1120 605 1085 622 1040 631 1010 626 988 612 982 585 983 540 978 510 972 480 968 465 945 462 922 479 890 465 860 455 835 425 818 400", 7),
];
const WETLANDS = [
  coast("1103 403 1118 392 1135 392 1150 402 1165 420 1176 440 1210 455 1240 460 1262 480 1276 492 1268 528 1245 526 1230 505 1200 505 1170 492 1140 480 1120 460 1110 430", 6),
  coast("1198 515 1220 512 1240 530 1245 545 1225 550 1215 566 1207 560 1210 545 1198 535", 6),
  coast("665 205 676 215 685 225 678 230 662 222", 4),
  coast("732 184 742 188 748 200 742 206 740 220 732 236 730 215 736 204 728 194", 6),
  coast("530 226 548 225 570 231 545 233", 2),
  coast("862 322 867 330 864 345 860 338", 3),
  coast("885 312 895 322 893 330 888 322", 3),
  coast("895 350 906 350 896 368 891 364", 3),
  coast("868 362 878 370 884 386 874 378", 3),
  coast("950 458 968 460 968 468 958 464", 2),
];
const spread = (n, x, y, w, h) => Array.from({ length: n }, () => [x + rnd() * w, y + rnd() * h]);
const DOTS = [...spread(70, 1010, 410, 130, 120), ...spread(14, 835, 370, 40, 60), ...spread(24, 885, 345, 50, 80), ...spread(8, 660, 448, 40, 60), ...spread(18, 700, 190, 80, 25)];
const STREAKS = spread(26, 752, 192, 34, 44);

function Islands() {
  return (
    <MapDrawing width="323" height="187" viewBox="396 135 904 560" preserveAspectRatio="none" role="img" aria-label="Map of Maui county">
      {ISLANDS.map((d, i) => <path key={i} d={d} fill="none" stroke="#4d5357" strokeWidth=".8" vectorEffect="non-scaling-stroke" />)}
      {WETLANDS.map((d, i) => <path key={i} d={d} fill="#1b559a" />)}
      {STREAKS.map(([x, y], i) => <path key={i} d={`M${x} ${y}l${i % 2 ? 7 : -5} ${i % 3 ? -8 : 7}`} stroke="#3c6796" strokeWidth="2" />)}
      <path d="M1138 398l-6 40M1150 408l-8 44M1160 424l-6 40M1168 440l-4 36M1176 450l-4 30M1210 478l8-10M1200 535l44-10M1212 516l26 30" stroke="#dfe9f4" strokeWidth="2" fill="none" />
      {DOTS.map(([x, y], i) => <rect key={i} x={x} y={y} width="2.600" height="2.600" fill="#71808b" />)}
    </MapDrawing>
  );
}

function DockHead({ title }) {
  return (
    <DockTitle>
      <Dots /><span>{title}</span><Dots />
      <CloseDock aria-label={`Close ${title}`}>
        <svg width="7" height="7" viewBox="0 0 7 7"><path d="M1 1l5 5M6 1L1 6" stroke="#000" strokeWidth="1.500" /></svg>
      </CloseDock>
    </DockTitle>
  );
}

function Combo({ id, value, off, white, w, label }) {
  return (
    <SelectWrap $off={off} $white={white} $w={w}>
      <select id={id} disabled={off} defaultValue={value} aria-label={label}><option>{value}</option></select>
      <SelectArrow><Tri $dir="down" $s={off ? 3 : 4} $color={off ? "#777" : "#000"} /></SelectArrow>
    </SelectWrap>
  );
}

function SpinBox({ id, value, off }) {
  return (
    <Spin $off={off}>
      <input id={id} defaultValue={value} disabled={off} />
      <SpinButtons>
        <button type="button" aria-label="Increase"><Tri $dir="up" $color={off ? "#777" : "#000"} /></button>
        <button type="button" aria-label="Decrease"><Tri $dir="down" $color={off ? "#777" : "#000"} /></button>
      </SpinButtons>
    </Spin>
  );
}

function Define({ what }) {
  return <DefineButton type="button" aria-label={`${what} override`}><Icon name="dataDefined" size={18} /></DefineButton>;
}

function CompositionForm() {
  return (
    <Form onSubmit={(e) => e.preventDefault()}>
      <GroupHead><Tri $dir="down" $s={5} $color="#333" />Paper and quality</GroupHead>
      <Fields>
        <Field><Label htmlFor="presets">Presets</Label><Combo id="presets" value="A4 (210x297 mm)" /><Define what="Presets" /></Field>
        <Field><Label htmlFor="width">Width</Label><SpinBox id="width" value="297.00" off /><Define what="Width" /></Field>
        <Field><Label htmlFor="height">Height</Label><SpinBox id="height" value="210.00" off /><Define what="Height" /></Field>
        <Field $wide $h={18}><Label htmlFor="units">Units</Label><Combo id="units" value="mm" off /></Field>
        <Field><Label htmlFor="pages">Number of pages</Label><SpinBox id="pages" value="1" /><Define what="Pages" /></Field>
        <Field><Label htmlFor="orient">Orientation</Label><Combo id="orient" value="Landscape" /><Define what="Orientation" /></Field>
        <Field $wide><Label htmlFor="bg">Page background</Label><ChangeButton id="bg" type="button"><Swatch />Change...</ChangeButton></Field>
        <Field $wide><Label htmlFor="dpi">Export resolution</Label><SpinBox id="dpi" value="300 dpi" /></Field>
        <Field $wide $h={14}><Label><Check $s={11} />Print as raster</Label></Field>
        <Field $wide $h={18}><Label><Check $s={11} />World file on</Label><Combo value="Map 0" off label="World file map" /></Field>
      </Fields>
      <GroupHead $closed><Tri $dir="right" $s={5} $color="#333" />Guides and Grid</GroupHead>
    </Form>
  );
}

const TOP_TOOLS = ["newPage", "copyPage", "wrench", "open", "save", "print", "expImage", "expSvg", "expPdf", "prev", "redo"];
const VIEW_TOOLS = ["zoomFull", "zoomActual", "zoomIn", "zoomOut", "refresh"];
const ITEM_TOOLS = ["group", "ungroup", "lock", "unlock", "raise", "align"];
const ITEMS = ["Data Source: Office of P...", "[% concat('Created on: ',...", "Wetlands Map", "[% concat('County of ', ''...", "Map 0"];
const tools = (list, on) => list.map((n) => <Tool key={n} $on={n === on} aria-label={n}><Icon name={n} /></Tool>);

function ComposerWindow() {
  return (
    <Window $width={843}>
      <Glass>
        <Caption>
          <Title><Icon name="qgis" size={11} />Composer 1</Title>
          <CaptionControls w={23} wc={39} h={16} />
        </Caption>
      </Glass>
      <Composer>
        <MenuBar>
          <MenuButton>Composer</MenuButton>
          <MenuButton>Edit</MenuButton>
          <MenuButton>View</MenuButton>
          <MenuButton>Layout</MenuButton>
          <MenuSlot>
            <MenuButton $open $pad={4}>Atlas</MenuButton>
            <AtlasMenu />
          </MenuSlot>
          <MenuButton>Settings</MenuButton>
        </MenuBar>
        <ToolBar>
          <Grip />
          {tools(["save"])}
          <Rule />
          {tools(TOP_TOOLS)}
          <Grip $margin="0 0 0 11px" />
          {tools(VIEW_TOOLS)}
          <Grip $margin="0 0 0 6px" />
          {tools(ITEM_TOOLS)}
          <Grip $margin="0 0 0 6px" />
          {tools(["preview", "first", "prev"], "preview")}
          <More>»</More>
        </ToolBar>
        <Workspace>
          <ToolBox>
            <Grip $across />
            <ToolGroup $gap={1}>{tools(["hand", "pageZoom", "select", "moveContent"], "select")}</ToolGroup>
            <Rule $across />
            <ToolGroup>{tools(["addMap", "addImage", "addLabel", "addLegend", "addScale", "addShape", "addArrow", "addTable", "addHtml"])}</ToolGroup>
          </ToolBox>
          <MapView>
            <Corner />
            <Ruler zero={30} from={-4} to={63} />
            <Ruler vertical zero={98} from={-13} to={56} />
            <Canvas>
              <MapPage>
                <MapTitle>Wetlands Map</MapTitle>
                <MapSubtitle>County of Maui</MapSubtitle>
                <Islands />
                <MapNotes>
                  <SourceNote>Data Source:<br />Office of Planning, State of Hawaii</SourceNote>
                  <span>Created on: 2015-04-30</span>
                </MapNotes>
              </MapPage>
            </Canvas>
          </MapView>
          <Splitter />
          <Panel>
            <Tabs><Tab $on $pad={8}>Items</Tab><Tab $pad={10}>Command history</Tab></Tabs>
            <DockHead title="Items" />
            <TreeFrame>
              <Tree>
                <colgroup><col width="25" /><col width="26" /><col /></colgroup>
                <thead>
                  <tr><th aria-label="Visible"><Icon name="eye" size={13} /></th><th aria-label="Locked"><Icon name="lock" size={13} /></th><th>Item</th></tr>
                </thead>
                <tbody>
                  {ITEMS.map((t, i) => (
                    <TreeRow key={t} $on={i === 4}>
                      <td><Check defaultChecked aria-label={`Show ${t}`} /></td>
                      <td><Check aria-label={`Lock ${t}`} /></td>
                      <td>{t}</td>
                    </TreeRow>
                  ))}
                </tbody>
              </Tree>
            </TreeFrame>
            <Dots $w={90} />
            <Tabs><Tab $on $pad={8}>Composition</Tab><Tab $pad={10}>Item properties</Tab><Tab>Atlas generation</Tab></Tabs>
            <DockHead title="Composition" />
            <ScrollArea>
              <CompositionForm />
              <ScrollBar>
                <ScrollButton aria-label="Scroll up"><Tri $dir="up" /></ScrollButton>
                <Thumb />
                <ScrollButton aria-label="Line up"><Tri $dir="up" /></ScrollButton>
                <ScrollButton aria-label="Scroll down"><Tri $dir="down" /></ScrollButton>
              </ScrollBar>
              <ScrollBar $row>
                <ScrollButton aria-label="Scroll left"><Tri $dir="left" /></ScrollButton>
                <Thumb $row />
                <ScrollButton aria-label="Line left"><Tri $dir="left" /></ScrollButton>
                <ScrollButton aria-label="Scroll right"><Tri $dir="right" /></ScrollButton>
              </ScrollBar>
            </ScrollArea>
          </Panel>
        </Workspace>
        <StatusBar>
          <span>x: 62.1528 mm</span>
          <span>y: 0 mm</span>
          <span>page: 1</span>
          <Combo value="45.1%" white label="Zoom" w={83} />
          <StatusRight>
            <span>Atlas feature 5 of 5</span>
            <ResizeGrip width="10" height="10" viewBox="0 0 10 10"><path d="M0 10L10 0M4 10l6-6M7 10l3-3" stroke="#999" /></ResizeGrip>
          </StatusRight>
        </StatusBar>
      </Composer>
    </Window>
  );
}

/* ---------- file explorer ---------- */

const Explorer = styled(Client)`
  background: #fcfcfc;
  font: 12px/16px ${segoe};
`;
const ExplorerGlass = styled(Glass)`
  font: 12px/16px ${segoe};
`;
const AddressRow = styled.div`
  display: flex;
  align-items: center;
  height: 46px;
  padding: 8px 0 0 4px;
`;
const RoundButton = styled.button`
  display: flex;
  align-items: center;
  justify-content: center;
  width: 26px;
  height: 26px;
  margin-right: 3px;
  border: 2px solid ${(p) => (p.$off ? "#93a8bd" : "#8b9db5")};
  border-radius: 50%;
  background: ${(p) => (p.$off ? "linear-gradient(#e8f0f8, #b9cfe5)" : "linear-gradient(#7f9fd6 0, #2c55b0 45%, #10328f 50%, #2f9be8 100%)")};
`;
const Address = styled.div`
  flex: 1;
  display: flex;
  align-items: center;
  gap: 9px;
  height: 23px;
  margin-left: 4px;
  padding: 0 7px 0 2px;
  border: 1px solid #7f93a8;
  background: linear-gradient(90deg, #f4f9fe, #eaf4fd 60%, #f2f8fe);
`;
const Crumb = styled.button`
  color: #111;
`;
const Push = styled.span`
  flex: 1;
`;
const GoButton = styled.button`
  display: flex;
  align-items: center;
  justify-content: center;
  width: 26px;
  height: 23px;
  border: 1px solid #7f93a8;
  border-left: 0;
  background: #eaf4fd;
`;
const SearchBox = styled.label`
  display: flex;
  align-items: center;
  width: 252px;
  height: 23px;
  margin-left: 7px;
  padding: 0 6px 0 8px;
  border: 1px solid #8ea1b5;
  background: #f1f8fe;
  input { flex: 1; min-width: 0; border: 0; outline: 0; background: none; font-style: italic; }
  input::placeholder { color: #707070; opacity: 1; }
`;
const CommandBar = styled.div`
  display: flex;
  align-items: center;
  height: 35px;
  padding: 0 16px 0 19px;
  border-top: 2px solid #cfd3e3;
  border-bottom: 1px solid #a0afc3;
  background: linear-gradient(#fbfdff 0, #eef3fb 45%, #dde7f5 52%, #dce6f4 100%);
  color: #1e395b;
`;
const Command = styled.button`
  display: flex;
  align-items: center;
  gap: ${(p) => p.$gap || 6}px;
  margin-right: ${(p) => p.$after}px;
`;
const Split = styled.div`
  display: grid;
  grid-template-columns: 166px 1fr;
  height: 431px;
`;
const NavPane = styled.nav`
  padding: 9px 2px 0 1px;
  border-right: 1px solid #d9e4f1;
`;
const NavGroup = styled.ul`
  margin-bottom: 21px;
`;
const NavItem = styled.a`
  display: flex;
  align-items: center;
  gap: 5px;
  height: 22px;
  padding-left: ${(p) => (p.$root ? 20 : 30)}px;
  border: 1px solid ${(p) => (p.$on ? "#d9d9d9" : "transparent")};
  border-radius: 3px;
  background: ${(p) => (p.$on ? "linear-gradient(#f8f8f8, #e5e5e5)" : "none")};
  color: #111;
  text-decoration: none;
`;
const FilePane = styled.div`
  position: relative;
  padding: 0 50px 0 15px;
`;
const Files = styled.table`
  width: 100%;
  table-layout: fixed;
  border-collapse: separate;
  border-spacing: 0;
  th { height: 26px; padding: 0 0 0 7px; font-weight: normal; text-align: left; color: #4c607a; border-right: 1px solid #e0e8f2; }
  th:first-child { padding-left: 3px; }
  td { height: 22px; padding: 0 0 0 7px; color: #6d6d6d; border: 1px solid transparent; border-width: 1px 0; }
  td:last-child { padding-right: 4px; text-align: right; border-right-width: 1px; border-radius: 0 3px 3px 0; }
  td:first-child { padding-left: 4px; border-left-width: 1px; border-radius: 3px 0 0 3px; }
  thead::after { content: ""; display: block; height: 6px; }
`;
const FileRow = styled.tr`
  ${(p) => p.$on && css`
    td { background: linear-gradient(#dcebfd, #c1dbfc); border-color: #84acdd !important; }
    td:not(:last-child) { border-right-color: transparent !important; }
  `}
`;
const FileName = styled.span`
  display: flex;
  align-items: center;
  gap: 4px;
  color: #111;
`;
const SortMark = styled.span`
  position: absolute;
  left: 144px;
  top: 1px;
`;
const Details = styled.div`
  display: flex;
  height: 55px;
  padding: 5px 0 0 21px;
  border-top: 1px solid #c4d3e6;
  background: linear-gradient(#e9f0f9, #f1f5fb 12px);
`;
const Thumbnail = styled.svg`
  background: #fff;
  box-shadow: 1px 1px 2px #999;
  margin-right: 21px;
`;
const DetailGrid = styled.dl`
  display: grid;
  grid-template-columns: 75px 61px 136px 38px 136px 68px auto;
  grid-template-rows: 19px 19px;
  column-gap: 6px;
  align-items: center;
  margin: 0;
  white-space: nowrap;
  dt { font-size: 11px; text-align: right; color: #5a6b82; }
  dd { margin: 0; display: flex; align-items: center; gap: 4px; color: #1e395b; }
`;
const DetailName = styled.dd`
  && { font-size: 13px; color: #111; }
`;
const DetailType = styled.dd`
  && { color: #5a6b82; font-size: 11px; }
`;

const NAV = [
  [["favorites", "Favorites"], ["desktop", "Desktop"], ["gdrive", "Google Drive"], ["recent", "Recent Places"], ["downloads", "Downloads"], ["folder", "qgis-tutorials"]],
  [["libraries", "Libraries"], ["documents", "Documents"], ["music", "Music"], ["pictures", "Pictures"], ["videos", "Videos"]],
  [["computer", "Computer"], ["disk", "Local Disk (C:)"]],
  [["network", "Network"]],
];
const FILES = [
  ["output_1.jpg", "30-04-2015 19:56", "528 KB"],
  ["output_2.jpg", "30-04-2015 19:56", "242 KB"],
  ["output_3.jpg", "30-04-2015 19:57", "573 KB"],
  ["output_4.jpg", "30-04-2015 19:57", "244 KB"],
  ["output_5.jpg", "30-04-2015 19:57", "295 KB"],
];

function ExplorerWindow() {
  return (
    <Window $width={847} $heavy>
      <ExplorerGlass $heavy>
        <Caption>
          <span />
          <CaptionControls w={29} wc={48} h={19} />
        </Caption>
        <AddressRow>
          <RoundButton aria-label="Back"><svg width="16" height="16" viewBox="0 0 16 16"><path d="M1 8l6-6h3L7 6h8v4H7l3 4H7z" fill="#fff" /></svg></RoundButton>
          <RoundButton $off aria-label="Forward"><svg width="16" height="16" viewBox="0 0 16 16"><path d="M15 8L9 2H6l3 4H1v4h8l-3 4h3z" fill="#d5e3f1" stroke="#b5c8dc" strokeWidth=".7" /></svg></RoundButton>
          <Tri $dir="down" $s={5} $color="#2c6a9c" />
          <Address>
            <Icon name="folder" size={16} />
            <Tri $dir="right" $s={4} />
            <Crumb>ujaval</Crumb>
            <Tri $dir="right" $s={4} />
            <Crumb>Downloads</Crumb>
            <Tri $dir="right" $s={4} />
            <Crumb>hawaii</Crumb>
            <Push />
            <Tri $dir="down" $s={4} $color="#0b1a6b" />
          </Address>
          <GoButton aria-label="Refresh"><Icon name="goRefresh" size={16} /></GoButton>
          <SearchBox><input placeholder="Search hawaii" aria-label="Search hawaii" /><Icon name="search" size={13} /></SearchBox>
        </AddressRow>
      </ExplorerGlass>
      <Explorer>
        <CommandBar>
          <Command $after={31}>Organize<Tri $dir="down" $s={4} $color="#1e395b" /></Command>
          <Command $after={31} $gap={4}><Icon name="jpg" size={16} />Preview<Push /><Tri $dir="down" $s={4} $color="#1e395b" /></Command>
          <Command $after={31}>Share with<Tri $dir="down" $s={4} $color="#1e395b" /></Command>
          <Command $after={31}>Print</Command>
          <Command $after={0}>New folder</Command>
          <Push />
          <Command $after={23} $gap={10} aria-label="Change view"><Icon name="view" size={16} /><Tri $dir="down" $s={4} $color="#1e395b" /></Command>
          <Command $after={20} aria-label="Preview pane"><Icon name="pane" size={17} /></Command>
          <Command $after={0} aria-label="Help"><Icon name="help" size={17} /></Command>
        </CommandBar>
        <Split>
          <NavPane>
            {NAV.map((group, g) => (
              <NavGroup key={g}>
                {group.map(([icon, label], i) => (
                  <li key={label}><NavItem href="#" $root={i === 0} $on={label === "Downloads"}><Icon name={icon} size={16} />{label}</NavItem></li>
                ))}
              </NavGroup>
            ))}
          </NavPane>
          <FilePane>
            <SortMark><Tri $dir="up" $color="#6d9cb8" /></SortMark>
            <Files>
              <colgroup><col /><col width="125" /><col width="124" /><col width="82" /></colgroup>
              <thead><tr><th>Name</th><th>Date modified</th><th>Type</th><th>Size</th></tr></thead>
              <tbody>
                {FILES.map(([name, date, size], i) => (
                  <FileRow key={name} $on={i === 0}>
                    <td><FileName><Icon name="jpg" size={16} />{name}</FileName></td>
                    <td>{date}</td>
                    <td>JPG File</td>
                    <td>{size}</td>
                  </FileRow>
                ))}
              </tbody>
            </Files>
            <Pointer $x={389} $y={361} />
          </FilePane>
        </Split>
        <Details>
          <Thumbnail width="58" height="42" viewBox="0 0 58 42" aria-hidden="true">
            <path d="M20 3h16M22 6h12" stroke="#666" strokeWidth="1" />
            <path d="M12 18l8-2 6-7 5 8 4 8 9 7-3 2-12-2-5 3-6-4 1-6z" fill="#d3d8da" stroke="#aab" strokeWidth=".5" />
            <path d="M2 39h14M44 39h11" stroke="#999" strokeWidth=".8" />
          </Thumbnail>
          <DetailGrid>
            <DetailName>output_1.jpg</DetailName>
            <dt>State:</dt><dd><Icon name="shared" size={17} />Shared</dd>
            <dt>Tags:</dt><dd>Add a tag</dd>
            <dt>Dimensions:</dt><dd>3507 x 2480</dd>
            <DetailType>JPG File</DetailType>
            <dt>Date taken:</dt><dd>Specify date taken</dd>
            <dt>Rating:</dt><dd>{[1, 2, 3, 4, 5].map((n) => <Icon key={n} name="rate" size={14} />)}</dd>
          </DetailGrid>
        </Details>
      </Explorer>
    </Window>
  );
}

export default function App() {
  return (
    <Page>
      <GlobalStyle />
      <Border>
        <Watermark aria-hidden="true"><span>WCCBM</span></Watermark>
        <Inner>
          <Header>
            <CourseCode>USIT6P4</CourseCode>
            <CourseTitle>Principles of Geographic Information Systems Practical</CourseTitle>
          </Header>
          <Steps>
            <Step><span>32.</span><span>Once you are satisfied with the map layout, go to Atlas<Arrow>‣</Arrow> Export Atlas as Images.</span></Step>
          </Steps>
          <Figure $pad="2px 0 1px 3px"><ComposerWindow /></Figure>
          <Steps start={33}>
            <Step><span>33.</span><span>Select a directory on your computer and click Choose.</span></Step>
            <Step><span>34.</span><span>The Atlas tool will now iterate through each feature in the coverage layer and create a separate map image based on the template we created. You can see the images in the directory once the process completes.</span></Step>
          </Steps>
          <Figure $pad="3px 0 0 3px"><ExplorerWindow /></Figure>
          <Footer>
            <PurpleBar />
            <PageNumber>157</PageNumber>
            <FooterText>
              <Semester>T.Y.B.Sc.(IT) SEMESTER VI</Semester>
              <span>Western College of Commerce &amp; Business Management</span>
            </FooterText>
          </Footer>
        </Inner>
      </Border>
    </Page>
  );
}
